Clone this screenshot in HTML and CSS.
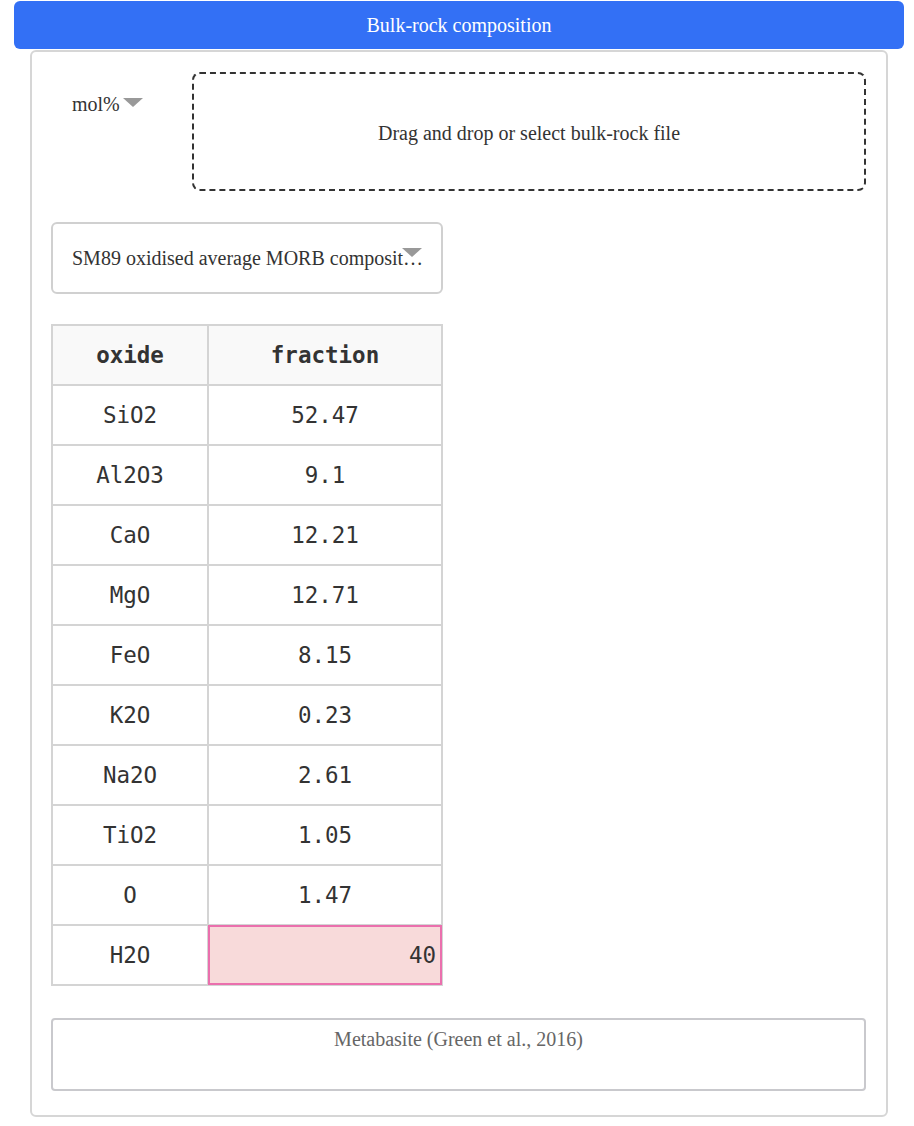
FILE: index.html
```html
<!DOCTYPE html>
<html>
<head>
<meta charset="utf-8">
<link rel="stylesheet" href="styles.css">
</head>
<body>
<div class="page">
  <div class="title-btn">Bulk-rock composition</div>
  <div class="panel">
    <div class="top-row">
      <div class="unit-select"><span class="unit-label">mol%</span><span class="caret"></span></div>
      <div class="dropzone">Drag and drop or select bulk-rock file</div>
    </div>
    <div class="preset-select">
      <span class="preset-text">SM89 oxidised average MORB composition</span>
      <span class="caret caret-preset"></span>
    </div>
    <table class="comp-table">
      <thead>
        <tr><th>oxide</th><th>fraction</th></tr>
      </thead>
      <tbody>
        <tr><td>SiO2</td><td>52.47</td></tr>
        <tr><td>Al2O3</td><td>9.1</td></tr>
        <tr><td>CaO</td><td>12.21</td></tr>
        <tr><td>MgO</td><td>12.71</td></tr>
        <tr><td>FeO</td><td>8.15</td></tr>
        <tr><td>K2O</td><td>0.23</td></tr>
        <tr><td>Na2O</td><td>2.61</td></tr>
        <tr><td>TiO2</td><td>1.05</td></tr>
        <tr><td>O</td><td>1.47</td></tr>
        <tr><td>H2O</td><td class="editing">40</td></tr>
      </tbody>
    </table>
    <div class="model-box">Metabasite (Green et al., 2016)</div>
  </div>
</div>
</body>
</html>
```

FILE: styles.css
```css
html, body {
  margin: 0;
  padding: 0;
  background: #ffffff;
}

.page {
  padding: 1px 10px 0 14px;
  font-family: "Liberation Serif", "Times New Roman", serif;
  color: #333;
}

.title-btn {
  height: 48px;
  background: #3370f5;
  color: #ffffff;
  border-radius: 6px;
  font-size: 20px;
  display: flex;
  align-items: center;
  justify-content: center;
}

.panel {
  margin: 1px 16px 0;
  border: 2px solid #d6d6d6;
  border-radius: 6px;
  padding: 20px 20px 25px 19px;
  height: 1067px;
  box-sizing: border-box;
}

.top-row {
  display: flex;
  gap: 21px;
}

.unit-select {
  width: 120px;
  padding: 20px 0 0 21px;
  box-sizing: border-box;
  display: flex;
  align-items: flex-start;
  font-size: 20px;
  color: #333;
}

.unit-label {
  line-height: 24px;
}

.caret {
  display: inline-block;
  width: 0;
  height: 0;
  border-left: 10px solid transparent;
  border-right: 10px solid transparent;
  border-top: 9px solid #999;
  margin: 6px 0 0 3px;
}

.dropzone {
  flex: 1;
  height: 119px;
  box-sizing: border-box;
  border: 2px dashed #333;
  border-radius: 8px;
  display: flex;
  align-items: center;
  justify-content: center;
  font-size: 20px;
  color: #333;
  padding-top: 4px;
}

.preset-select {
  position: relative;
  margin-top: 31px;
  width: 392px;
  height: 72px;
  box-sizing: border-box;
  border: 2px solid #d0d0d0;
  border-radius: 6px;
  padding: 0 13px 0 19px;
  display: flex;
  align-items: center;
  font-size: 20px;
  color: #333;
}

.preset-text {
  white-space: nowrap;
  overflow: hidden;
  text-overflow: ellipsis;
  width: 100%;
}

.caret-preset {
  position: absolute;
  left: 349px;
  top: 24px;
  margin: 0;
}

.comp-table {
  margin-top: 30px;
  border-collapse: collapse;
  font-family: "DejaVu Sans Mono", "Liberation Mono", monospace;
  font-size: 22.5px;
  color: #333;
  width: 392px;
  table-layout: fixed;
}

.comp-table th,
.comp-table td {
  border: 2px solid #d4d4d4;
  height: 60px;
  padding: 0;
  text-align: center;
  box-sizing: border-box;
}

.comp-table th:first-child,
.comp-table td:first-child {
  width: 156px;
}

.comp-table th {
  background: #f9f9f9;
  font-weight: bold;
}

.comp-table td.editing {
  position: relative;
  background: #f8dada;
  text-align: right;
  padding-right: 5px;
}

.comp-table td.editing::after {
  content: "";
  position: absolute;
  top: -1px;
  left: -1px;
  right: -1px;
  bottom: -1px;
  border: 2px solid #ea6fad;
  pointer-events: none;
}

.model-box {
  margin-top: 32px;
  height: 73px;
  box-sizing: border-box;
  border: 2px solid #c9c9cd;
  border-radius: 4px;
  text-align: center;
  font-size: 20px;
  color: #666;
  padding-top: 8px;
}
```
